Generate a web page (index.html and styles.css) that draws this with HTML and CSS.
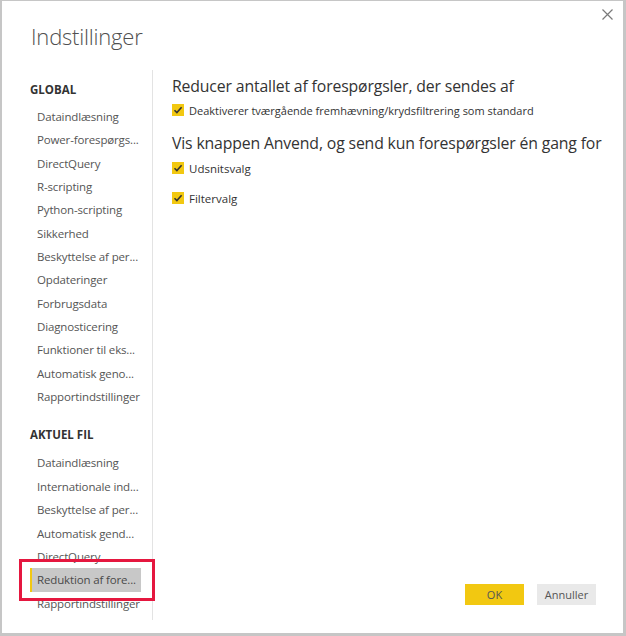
FILE: index.html
```html
<!DOCTYPE html>
<html lang="da">
<head>
<meta charset="utf-8">
<title>Indstillinger</title>
<link rel="stylesheet" href="styles.css">
</head>
<body>
<div class="dialog">
  <button class="close" aria-label="Luk">
    <svg width="11" height="11" viewBox="0 0 11 11"><path d="M0.5 0.5L10.5 10.5M10.5 0.5L0.5 10.5" stroke="#7a7a7a" stroke-width="1.2" fill="none"/></svg>
  </button>
  <h1 class="title">Indstillinger</h1>
  <div class="body">
    <nav class="sidebar">
      <div class="group-title">GLOBAL</div>
      <ul class="nav-list">
        <li>Dataindlæsning</li>
        <li>Power-forespørgs...</li>
        <li>DirectQuery</li>
        <li>R-scripting</li>
        <li>Python-scripting</li>
        <li>Sikkerhed</li>
        <li>Beskyttelse af per...</li>
        <li>Opdateringer</li>
        <li>Forbrugsdata</li>
        <li>Diagnosticering</li>
        <li>Funktioner til eks...</li>
        <li>Automatisk geno...</li>
        <li>Rapportindstillinger</li>
      </ul>
      <div class="group-title second">AKTUEL FIL</div>
      <ul class="nav-list">
        <li>Dataindlæsning</li>
        <li>Internationale ind...</li>
        <li>Beskyttelse af per...</li>
        <li>Automatisk gend...</li>
        <li>DirectQuery</li>
        <li class="selected">Reduktion af fore...</li>
        <li>Rapportindstillinger</li>
      </ul>
      <div class="highlight"></div>
    </nav>
    <main class="content">
      <h2 class="section-title">Reducer antallet af forespørgsler, der sendes af</h2>
      <label class="check first"><span class="box"><svg width="12" height="12" viewBox="0 0 12 12"><path d="M2.5 6.2L4.9 8.6L9.6 3.3" stroke="#333" stroke-width="1.6" fill="none"/></svg></span>Deaktiverer tværgående fremhævning/krydsfiltrering som standard</label>
      <h2 class="section-title second">Vis knappen Anvend, og send kun forespørgsler én gang for</h2>
      <label class="check strong"><span class="box"><svg width="12" height="12" viewBox="0 0 12 12"><path d="M2.5 6.2L4.9 8.6L9.6 3.3" stroke="#333" stroke-width="1.6" fill="none"/></svg></span>Udsnitsvalg</label>
      <label class="check strong gap"><span class="box"><svg width="12" height="12" viewBox="0 0 12 12"><path d="M2.5 6.2L4.9 8.6L9.6 3.3" stroke="#333" stroke-width="1.6" fill="none"/></svg></span>Filtervalg</label>
      <div class="actions">
        <button class="btn primary">OK</button>
        <button class="btn">Annuller</button>
      </div>
    </main>
  </div>
</div>
</body>
</html>
```
FILE: styles.css
```css
* { box-sizing: border-box; }
html, body { margin: 0; padding: 0; }
body {
  width: 626px;
  height: 636px;
  font-family: "Open Sans", "Noto Sans", sans-serif;
  background: #fff;
}
.dialog {
  position: relative;
  width: 626px;
  height: 636px;
  border-top: 1px solid #c6c6c6;
  border-left: 2px solid #c6c6c6;
  border-right: 3px solid #c6c6c6;
  border-bottom: 3px solid #c6c6c6;
  background: #fff;
  display: flex;
  flex-direction: column;
}
.close {
  position: absolute;
  top: 7px;
  right: 9px;
  width: 13px;
  height: 13px;
  padding: 1px;
  border: 0;
  background: none;
  line-height: 0;
}
.title {
  margin: 0;
  padding: 20px 0 0 29px;
  height: 69px;
  font-weight: 300;
  font-size: 22px;
  color: #505050;
  letter-spacing: -0.2px;
}
.body {
  flex: 1;
  display: flex;
  padding-bottom: 13px;
}
.sidebar {
  position: relative;
  width: 151px;
  padding: 10px 0 0 28px;
  border-right: 1px solid #e3e3e3;
}
.group-title {
  font-size: 11.5px;
  font-weight: 700;
  color: #333;
  height: 20px;
  line-height: 20px;
  margin-bottom: 5px;
}
.group-title.second {
  margin-top: 17px;
  margin-bottom: 6px;
}
.nav-list {
  list-style: none;
  margin: 0;
  padding: 0;
}
.nav-list li {
  height: 23.35px;
  line-height: 23.35px;
  padding-left: 7px;
  margin-right: 11px;
  font-size: 11.5px;
  color: #555;
  white-space: nowrap;
  letter-spacing: -0.15px;
}
.nav-list li.selected {
  background: #c8c8c8;
  border-left: 2px solid #f2c811;
  padding-left: 5px;
  color: #4a4a4a;
}
.highlight {
  position: absolute;
  left: 17px;
  top: 489px;
  width: 136px;
  height: 42px;
  border: 3px solid #e5173f;
}
.content {
  flex: 1;
  position: relative;
  padding: 4px 0 0 19px;
  display: flex;
  flex-direction: column;
}
.section-title {
  margin: 0;
  font-size: 15.8px;
  font-weight: 400;
  color: #333;
  letter-spacing: -0.15px;
  height: 24px;
  line-height: 24px;
}
.section-title.second {
  margin-top: 11px;
}
.check {
  display: flex;
  align-items: center;
  gap: 5px;
  font-size: 11px;
  color: #333;
  height: 20px;
}
.check.first {
  margin-top: 2px;
}
.check.strong {
  font-size: 11.5px;
  margin-top: 3px;
  font-weight: 500;
}
.check.gap {
  margin-top: 10px;
}
.box {
  width: 12px;
  height: 12px;
  background: #f2c811;
  display: inline-block;
  line-height: 0;
}
.actions {
  margin-top: auto;
  display: flex;
  gap: 13px;
  padding-left: 293px;
  padding-bottom: 15px;
}
.btn {
  width: 59px;
  height: 21px;
  border: 0;
  background: #e9e9e9;
  font-family: inherit;
  font-size: 11px;
  color: #555;
  padding: 0;
}
.btn.primary {
  background: #f2c811;
}
```
